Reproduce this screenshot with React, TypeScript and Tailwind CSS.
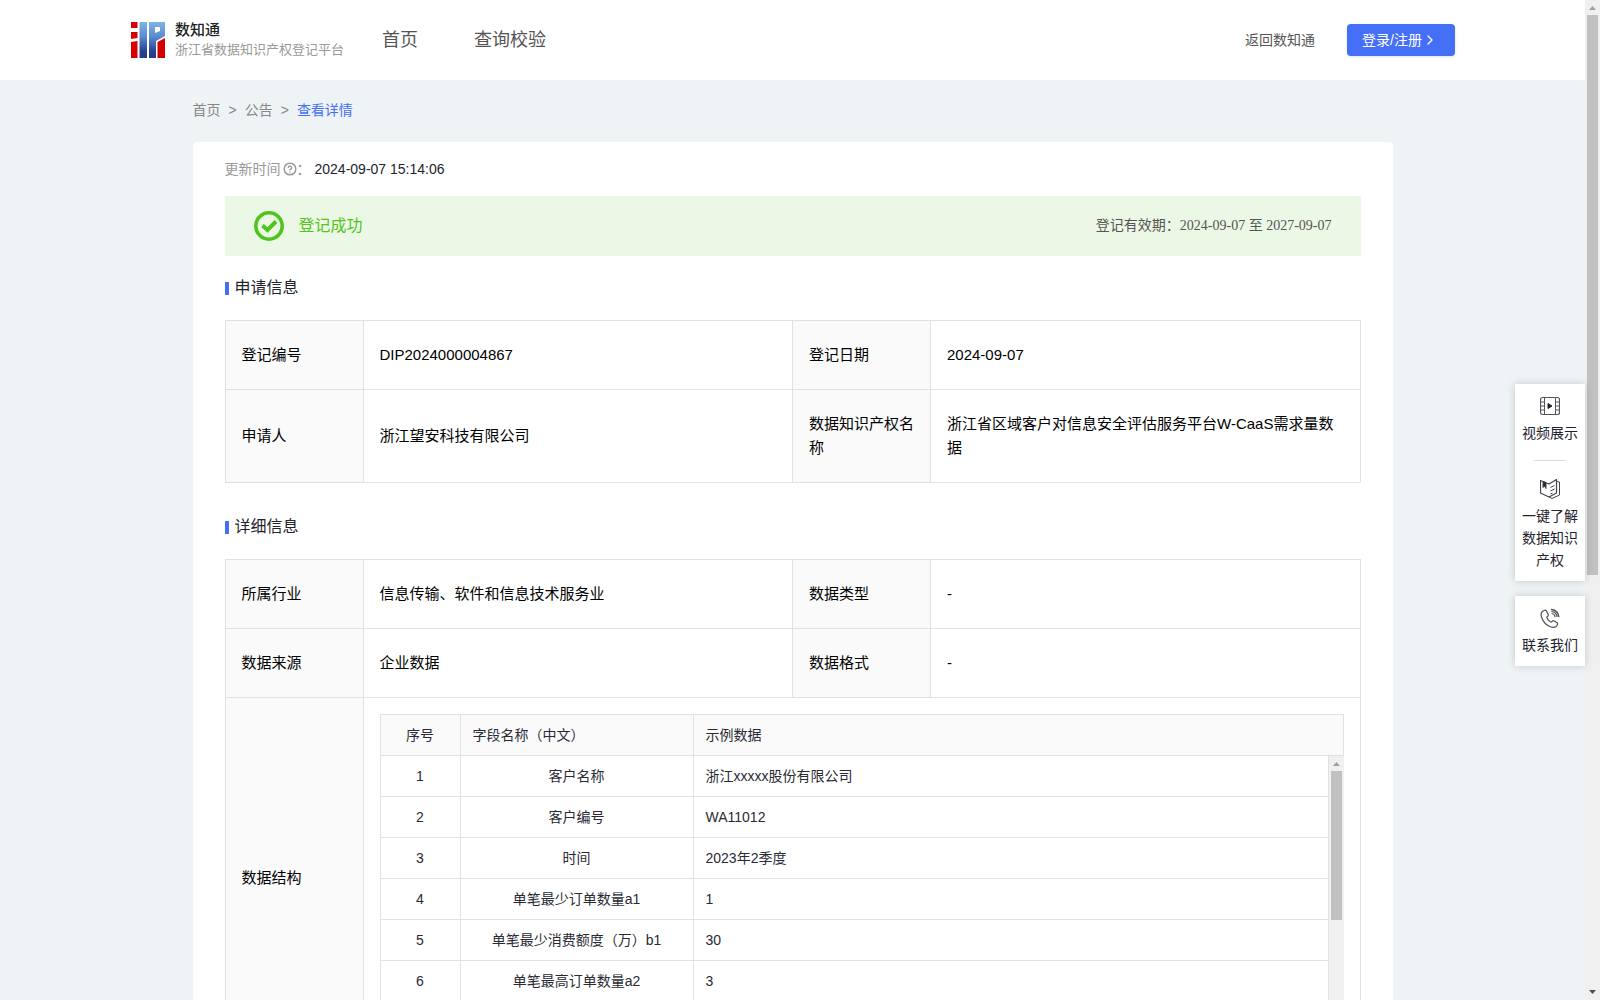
import type { ReactNode } from "react";
import { ChevronRight, CircleHelp } from "lucide-react";

type InfoCell = { label: string; value: string };

const APPLY_ROWS: InfoCell[][] = [
  [
    { label: "登记编号", value: "DIP2024000004867" },
    { label: "登记日期", value: "2024-09-07" },
  ],
  [
    { label: "申请人", value: "浙江望安科技有限公司" },
    { label: "数据知识产权名称", value: "浙江省区域客户对信息安全评估服务平台W-CaaS需求量数据" },
  ],
];

const DETAIL_ROWS: InfoCell[][] = [
  [
    { label: "所属行业", value: "信息传输、软件和信息技术服务业" },
    { label: "数据类型", value: "-" },
  ],
  [
    { label: "数据来源", value: "企业数据" },
    { label: "数据格式", value: "-" },
  ],
];

const FIELDS = [
  { name: "客户名称", sample: "浙江xxxxx股份有限公司" },
  { name: "客户编号", sample: "WA11012" },
  { name: "时间", sample: "2023年2季度" },
  { name: "单笔最少订单数量a1", sample: "1" },
  { name: "单笔最少消费额度（万）b1", sample: "30" },
  { name: "单笔最高订单数量a2", sample: "3" },
];

function Logo() {
  return (
    <svg width="34" height="36" viewBox="0 0 34 36" aria-hidden="true">
      <defs>
        <linearGradient id="logo-blue" x1="0" y1="0" x2="0" y2="36" gradientUnits="userSpaceOnUse">
          <stop offset="0" stopColor="#7db4e6" />
          <stop offset="0.4" stopColor="#5b8ccf" />
          <stop offset="0.8" stopColor="#2a4591" />
          <stop offset="1" stopColor="#243a85" />
        </linearGradient>
      </defs>
      <path d="M0 0h6.500v6H0zM0 10h6.500v6L0 17zM0 20l6.500-1v17H0z" fill="#d40000" />
      <path d="M8.500 0h7.500v36H8.500z" fill="url(#logo-blue)" />
      <path d="M18 0h16v14l-9 5v17h-7zM24 5v6l5-2V5z" fill="url(#logo-blue)" fillRule="evenodd" />
      <path d="M26.500 20l7.500-4v20h-7.500z" fill="#d40000" />
    </svg>
  );
}

function VideoIcon() {
  return (
    <svg width="20" height="20" viewBox="0 0 20 20" fill="none" stroke="#55555d" aria-hidden="true">
      <rect x="0.5" y="1.5" width="19" height="17" rx="2" strokeWidth="1.2" />
      <path d="M4.500 1.500v17M15.500 1.500v17M.5 6h4M.5 10h4M.5 14h4M15.500 6h4M15.500 10h4M15.500 14h4" />
      <path d="M8 7.500l4 2.500-4 2.500z" fill="#22222a" stroke="#22222a" />
    </svg>
  );
}

function BookIcon() {
  return (
    <svg width="20" height="20" viewBox="0 0 20 20" fill="none" stroke="#44444c" strokeLinejoin="round" aria-hidden="true">
      <path d="M.5 1.500L9 5l7.500-4.500v13.500L9 18l-8.500-4z" strokeWidth="1.2" />
      <path d="M16.500 2.500l3 .5v13L12 19.500l-3-1.500" />
      <path d="M3 2.500v6l1.500-1.500L6 9.500v-6z" fill="#22222a" />
      <path d="M10.500 8.500l4-2M10.500 12l4-2M10.500 15l2-1" />
    </svg>
  );
}

function PhoneIcon() {
  return (
    <svg width="20" height="20" viewBox="0 0 20 20" fill="none" stroke="#55555d" strokeWidth="1.2" strokeLinecap="round" strokeLinejoin="round" aria-hidden="true">
      <path d="M4 2.500C1.500 3.500.5 6 1.500 9c1.500 4.500 5 8.500 9.500 10 3 1 5.500 0 6.500-2.500.3-.8 0-1.500-.7-2l-2.600-1.600c-.8-.5-1.500-.3-2.100.4l-.8.9c-2-.8-4-3-4.600-5l1.100-1c.6-.6.7-1.200.3-2L6.500 3.200C6 2.300 5.100 2 4 2.500z" />
      <path d="M12 5.500c1.800.3 2.800 1.500 3 3.200" />
      <path d="M11.500 1.500c4 .5 6.800 3 7.200 7" strokeWidth="1.600" />
      <path d="M11.800 3.500c3 .4 4.800 2 5.100 5" />
    </svg>
  );
}

function Header() {
  return (
    <header className="flex h-20 items-center bg-white pr-[130px] pl-[131px]">
      <Logo />
      <div className="ml-2.5 flex flex-col">
        <span className="text-[15px] leading-5 font-medium text-[#222]">数知通</span>
        <span className="text-[13px] leading-5 text-[#999]">浙江省数据知识产权登记平台</span>
      </div>
      <nav className="ml-[38px] flex gap-14 text-lg text-[#555]">
        <a href="#home">首页</a>
        <a href="#check">查询校验</a>
      </nav>
      <a href="#back" className="ml-auto text-sm text-[#555]">返回数知通</a>
      <button
        type="button"
        className="ml-8 flex h-8 w-[108px] items-center rounded-sm bg-[#456ff6] pl-[15px] text-sm text-white shadow-sm"
      >
        登录/注册
        <ChevronRight className="h-4 w-4" />
      </button>
    </header>
  );
}

function SectionTitle({ children }: { children: ReactNode }) {
  return (
    <h2 className="flex items-center gap-1.5 text-base leading-6 text-[#23232e]">
      <span className="mt-px h-[13px] w-1 bg-[#456ff6]" />
      {children}
    </h2>
  );
}

function InfoTable({ rows, children }: { rows: InfoCell[][]; children?: ReactNode }) {
  return (
    <table className="w-full table-fixed border-collapse text-[15px] leading-6 text-black">
      <colgroup>
        <col className="w-[138px]" />
        <col />
        <col className="w-[138px]" />
        <col />
      </colgroup>
      <tbody>
        {rows.map((row) => (
          <tr key={row[0].label}>
            {row.map((cell) => (
              <InfoPair key={cell.label} {...cell} />
            ))}
          </tr>
        ))}
        {children}
      </tbody>
    </table>
  );
}

function InfoPair({ label, value }: InfoCell) {
  return (
    <>
      <th scope="row" className="border border-[#e1e1e1] bg-[#fafafa] px-4 py-[22px] text-left font-normal">
        {label}
      </th>
      <td className="border border-[#e1e1e1] px-4 py-[22px]">{value}</td>
    </>
  );
}

function FieldCols() {
  return (
    <colgroup>
      <col className="w-20" />
      <col className="w-[233px]" />
      <col />
    </colgroup>
  );
}

function FieldTable() {
  return (
    <div className="text-sm leading-6 text-[#2a2a35]">
      <table className="w-full table-fixed border-collapse">
        <FieldCols />
        <thead>
          <tr className="bg-[#fafafa] text-left">
            <th className="border border-[#e1e1e1] px-3 py-2 text-center font-normal">序号</th>
            <th className="border border-[#e1e1e1] px-3 py-2 font-normal">字段名称（中文）</th>
            <th className="border border-[#e1e1e1] px-3 py-2 font-normal">示例数据</th>
          </tr>
        </thead>
      </table>
      <div className="flex h-[285px] overflow-hidden">
        <div className="min-w-0 flex-1">
          <table className="w-full table-fixed border-collapse">
            <FieldCols />
            <tbody>
              {FIELDS.map((field, i) => (
                <tr key={field.name}>
                  <td className="border border-t-0 border-[#e1e1e1] px-3 py-2 text-center">{i + 1}</td>
                  <td className="border border-t-0 border-[#e1e1e1] px-3 py-2 text-center">{field.name}</td>
                  <td className="border border-t-0 border-[#e1e1e1] px-3 py-2">{field.sample}</td>
                </tr>
              ))}
            </tbody>
          </table>
        </div>
        <div className="flex w-[15px] flex-col items-center bg-[#f0f0f0]">
          <ScrollArrow className="text-[#a0a0a0]" />
          <div className="h-[149px] w-[11px] bg-[#c1c1c1]" />
        </div>
      </div>
    </div>
  );
}

function ScrollArrow({ className }: { className: string }) {
  return (
    <svg width="15" height="15" viewBox="0 0 15 15" className={className} aria-hidden="true">
      <path d="M4 10h7L7.500 6z" fill="currentColor" />
    </svg>
  );
}

function SideTools() {
  return (
    <aside className="absolute top-96 right-[15px] flex w-[70px] flex-col gap-[15px] text-center text-sm leading-[22px] text-[#23232e]">
      <div className="flex flex-col items-center bg-white px-[7px] pt-3 pb-2.5 shadow-[0_0_8px_rgba(0,0,0,0.18)]">
        <a href="#video" className="flex flex-col items-center gap-1.5">
          <VideoIcon />
          视频展示
        </a>
        <hr className="mt-4 mb-[18px] w-8 border-[#dcdcdc]" />
        <a href="#guide" className="flex flex-col items-center gap-1.5">
          <BookIcon />
          一键了解数据知识产权
        </a>
      </div>
      <div className="bg-white px-[7px] pt-3 pb-2.5 shadow-[0_0_8px_rgba(0,0,0,0.18)]">
        <a href="#contact" className="flex flex-col items-center gap-1.5">
          <PhoneIcon />
          联系我们
        </a>
      </div>
    </aside>
  );
}

export default function App() {
  return (
    <div className="relative flex h-screen overflow-hidden bg-[#eef3f6] font-['Liberation_Sans','Noto_Sans_CJK_SC',sans-serif]">
      <div className="min-w-0 flex-1">
        <Header />
        <main className="mx-auto w-full max-w-[1200px]">
          <nav className="flex gap-2 pt-5 pb-[22px] text-sm text-[#888]">
            <a href="#home">首页</a>
            <span>&gt;</span>
            <a href="#notice">公告</a>
            <span>&gt;</span>
            <span className="text-[#456ff6]">查看详情</span>
          </nav>
          <div className="rounded bg-white px-8 pt-4 pb-8">
            <div className="flex items-center text-sm leading-[22px]">
              <span className="text-[#999]">更新时间</span>
              <CircleHelp className="ml-0.5 h-3.5 w-3.5 text-[#999]" strokeWidth={2.5} />
              <span className="text-[#888]">：</span>
              <span className="ml-1 text-[#23232e]">2024-09-07 15:14:06</span>
            </div>
            <div className="mt-4 flex h-[60px] items-center bg-[#ebf8e6] px-[29px]">
              <svg width="30" height="30" viewBox="0 0 30 30" fill="none" stroke="#4fc41c" aria-hidden="true">
                <circle cx="15" cy="15" r="13.2" strokeWidth="3.600" />
                <path d="M8.500 14.500l5 4.500 8.500-8.500" strokeWidth="4" />
              </svg>
              <span className="ml-[15px] text-base text-[#52c41a]">登记成功</span>
              <span className="ml-auto font-['Liberation_Serif','Noto_Sans_CJK_SC',serif] text-sm text-[#555]">
                登记有效期：2024-09-07 至 2027-09-07
              </span>
            </div>
            <section className="mt-5">
              <SectionTitle>申请信息</SectionTitle>
              <div className="mt-5">
                <InfoTable rows={APPLY_ROWS} />
              </div>
            </section>
            <section className="mt-8">
              <SectionTitle>详细信息</SectionTitle>
              <div className="mt-5">
                <InfoTable rows={DETAIL_ROWS}>
                  <tr>
                    <th scope="row" className="border border-[#e1e1e1] bg-[#fafafa] px-4 text-left font-normal">
                      数据结构
                    </th>
                    <td colSpan={3} className="border border-[#e1e1e1] p-4">
                      <FieldTable />
                    </td>
                  </tr>
                </InfoTable>
              </div>
            </section>
          </div>
        </main>
      </div>
      <SideTools />
      <div className="flex w-[15px] flex-col items-center bg-[#f0f0f0]">
        <ScrollArrow className="text-[#a0a0a0]" />
        <div className="h-[560px] w-[11px] bg-[#c1c1c1]" />
        <ScrollArrow className="mt-auto rotate-180 text-[#505050]" />
      </div>
    </div>
  );
}
